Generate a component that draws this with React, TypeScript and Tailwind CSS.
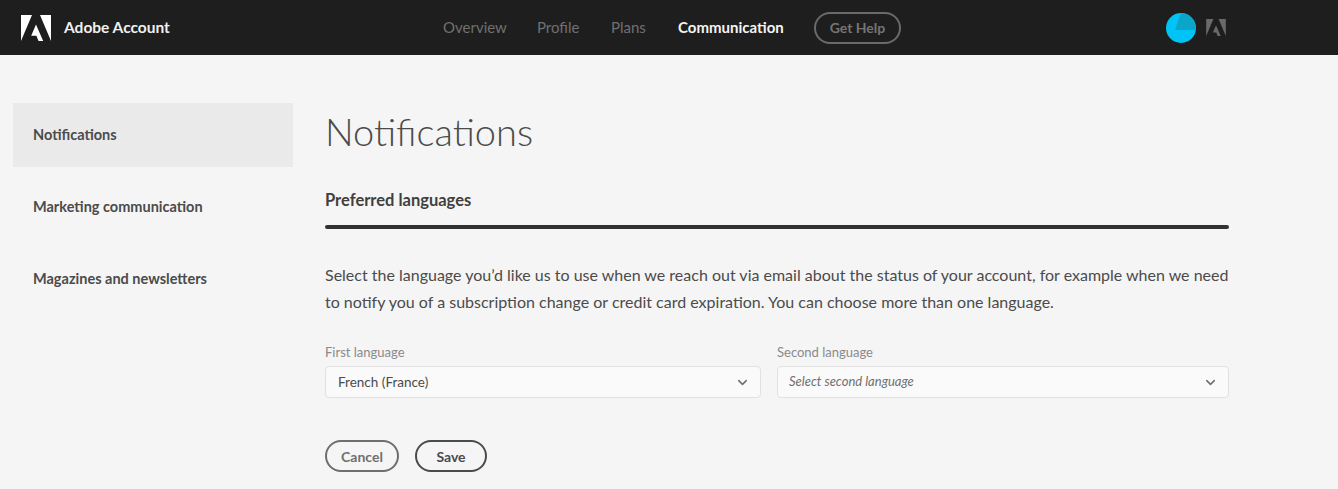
import { ChevronDown } from 'lucide-react';

function AdobeLogo({ className }: { className: string }) {
  return (
    <svg viewBox="0 0 30 26" className={className} fill="currentColor">
      <path d="M0 0h11L0 26z" />
      <path d="M19 0h11v26z" />
      <path d="M15 9.6 22.2 26h-4.7l-2.1-5.3h-5.2z" />
    </svg>
  );
}

function LangSelect({ label, value, placeholder, className }: { label: string; value: string; placeholder?: boolean; className: string }) {
  return (
    <div className={className}>
      <div className="text-[13px] leading-[18px] text-[#8a8a8a] mb-[5px]">{label}</div>
      <div className="h-8 flex items-center justify-between bg-[#fafafa] border border-[#e1e1e1] rounded-[4px] pr-[10px]">
        <span className={placeholder ? 'pl-[11px] text-[13px] italic text-[#707070]' : 'pl-3 text-[13.5px] text-[#4b4b4b]'}>{value}</span>
        <ChevronDown size={15} strokeWidth={2.5} className="text-[#6e6e6e]" />
      </div>
    </div>
  );
}

export default function App() {
  const sideItems = ['Notifications', 'Marketing communication', 'Magazines and newsletters'];

  return (
    <div className="w-[1338px] h-[489px] overflow-hidden bg-[#f5f5f5] font-['Lato','Noto_Sans',sans-serif]">
      <header className="h-[55px] bg-[#1e1e1e] flex items-center">
        <AdobeLogo className="w-[30px] h-[26px] ml-[21px] text-white" />
        <span className="ml-[13px] w-[379px] text-[15.5px] font-bold text-[#f0f0f0]">Adobe Account</span>
        <nav className="flex items-center text-[15px] text-[#707070]">
          <span className="w-[94px]">Overview</span>
          <span className="w-[74px]">Profile</span>
          <span className="w-[67px]">Plans</span>
          <span className="w-[136px] font-bold text-[#f4f4f4]">Communication</span>
          <span className="w-[87px] h-8 flex items-center justify-center rounded-full border-2 border-[#6a6a6a] text-[14px] font-bold text-[#757575]">Get Help</span>
        </nav>
        <div className="ml-[265px] w-[30px] h-[30px] rounded-full bg-[#00c4f5] overflow-hidden flex justify-end">
          <svg viewBox="0 0 30 30" className="w-[30px] h-[30px]">
            <path d="M15 0a15 15 0 0 1 15 15 l-.2 2H9z" fill="#0ba5c9" />
          </svg>
        </div>
        <AdobeLogo className="w-5 h-[17px] ml-[10px] text-[#6a6a6a]" />
      </header>

      <div className="flex">
        <aside className="w-[280px] ml-[13px] mt-12 flex flex-col gap-2">
          {sideItems.map((item, i) => (
            <div
              key={item}
              className={`h-16 flex items-center pl-5 text-[14.5px] font-bold text-[#4b4b4b] ${i === 0 ? 'bg-[#eaeaea]' : ''}`}
            >
              {item}
            </div>
          ))}
        </aside>

        <main className="w-[904px] ml-8">
          <h1 className="mt-[52px] text-[38px] leading-12 font-light text-[#4b4b4b]">Notifications</h1>
          <h2 className="mt-[33px] text-[16.5px] leading-6 font-bold text-[#3f3f3f]">Preferred languages</h2>
          <div className="mt-[13px] h-1 rounded-full bg-[#323232]" />
          <p className="mt-[32px] text-[16px] leading-[27px] text-[#4b4b4b]">
            Select the language you’d like us to use when we reach out via email about the status of your account, for example when we need to notify you of a subscription change or credit card expiration. You can choose more than one language.
          </p>
          <div className="mt-[28px] flex gap-4">
            <LangSelect label="First language" value="French (France)" className="w-[436px]" />
            <LangSelect label="Second language" value="Select second language" placeholder className="w-[452px]" />
          </div>
          <div className="mt-[42px] flex gap-4">
            <button className="w-[74px] h-8 rounded-full border-2 border-[#6e6e6e] text-[14px] font-bold text-[#707070]">Cancel</button>
            <button className="w-[72px] h-8 rounded-full border-2 border-[#4b4b4b] text-[14px] font-bold text-[#4b4b4b]">Save</button>
          </div>
        </main>
      </div>
    </div>
  );
}
